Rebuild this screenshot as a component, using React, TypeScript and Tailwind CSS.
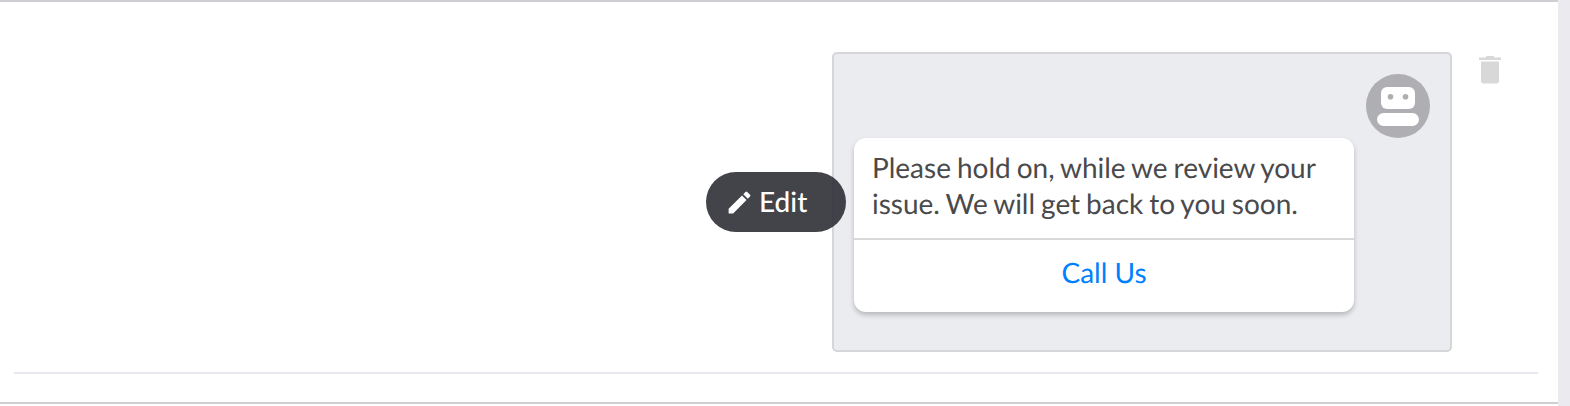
import React from "react";

export default function App() {
  return (
    <div className="flex w-[1570px] h-[406px] bg-white overflow-hidden font-['Lato','Liberation_Sans',sans-serif] antialiased [text-rendering:geometricPrecision]">
      <div className="w-[1558px] h-[404px] flex flex-col border-y-2 border-[#cfcfd3] bg-white">
        <div className="flex justify-end pt-[50px] pr-[57px] gap-[27px]">
          <div className="relative w-[620px] h-[300px] border-2 border-[#d6d6d9] rounded-[5px] bg-[#ebecf0] pt-[20px] px-[20px] flex flex-col">
            <div className="flex justify-end">
              <div className="w-[64px] h-[64px] rounded-full bg-[#aeaeb3] flex items-center justify-center">
                <svg width="64" height="64" viewBox="0 0 64 64">
                  <rect x="15" y="13" width="34" height="22" rx="6" fill="#fff" />
                  <circle cx="24.5" cy="22.7" r="2.8" fill="#aeaeb3" />
                  <circle cx="39.5" cy="22.7" r="2.8" fill="#aeaeb3" />
                  <rect x="11" y="39" width="42" height="13" rx="6.5" fill="#fff" />
                </svg>
              </div>
            </div>
            <div className="w-[500px] h-[174px] rounded-[12px] bg-white shadow-[0_3px_5px_rgba(0,0,0,0.22)] flex flex-col">
              <div className="h-[102px] px-[18px] pt-[11px] border-b-2 border-[#d9d9dc] text-[28px] leading-[36px] text-[#4a4a4c] [word-spacing:-1.2px]">
                Please hold on, while we review your
                <br />
                issue. We will get back to you soon.
              </div>
              <div className="flex-1 flex items-center justify-center text-[28px] leading-[36px] text-[#0080ff] pb-[8px]">
                Call Us
              </div>
            </div>
            <div className="absolute left-[-128px] top-[118px] w-[140px] h-[60px] rounded-[30px] bg-[#2f2f36]/90 flex items-center pl-[19px] gap-[5px] text-white text-[28px] font-medium">
              <svg width="29" height="29" viewBox="0 0 24 24" fill="#fff">
                <path d="M3 17.25V21h3.75L17.81 9.94l-3.75-3.75L3 17.25zM20.71 7.04a1 1 0 0 0 0-1.41l-2.34-2.34a1 1 0 0 0-1.41 0l-1.83 1.83 3.75 3.75 1.83-1.83z" />
              </svg>
              <span className="mt-[-2px]">Edit</span>
            </div>
          </div>
          <svg className="mt-[4px]" width="22" height="28" viewBox="0 0 22 28" fill="#d8d8d8">
            <path d="M7.5 0h7l1 1.5H22V4H0V1.5h6.5z" />
            <path d="M2 5.5h18V25a2.5 2.5 0 0 1-2.5 2.5h-13A2.5 2.5 0 0 1 2 25z" />
          </svg>
        </div>
        <div className="mx-[14px] mt-[20px] h-[2px] w-[1524px] bg-[#e8e8ee]" />
      </div>
      <div className="flex-1 h-full bg-[#ebebef]" />
    </div>
  );
}
